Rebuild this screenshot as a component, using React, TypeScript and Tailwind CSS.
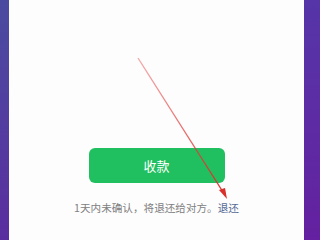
import React from "react";

export default function App() {
  return (
    <div className="relative flex h-[240px] w-[320px] overflow-hidden" style={{ fontFamily: '"Noto Sans CJK SC", "Noto Sans", sans-serif' }}>
      <div className="h-full w-[9px] bg-gradient-to-b from-[#4a4ba0] to-[#5a2d9f]" />
      <div className="flex h-full flex-1 flex-col items-center bg-[#fdfdfd] pt-[148px]">
        <div className="flex h-[35px] w-[136px] items-center justify-center rounded-[6px] bg-[#20bf60] text-[13px] text-white">
          收款
        </div>
        <div className="mt-[17px] text-[10.6px] leading-[16px] text-[#808080]">
          1天内未确认，将退还给对方。<span className="text-[#576b95]">退还</span>
        </div>
      </div>
      <div className="h-full w-[16px] bg-gradient-to-b from-[#5535a8] to-[#6420a0]" />
      <svg className="pointer-events-none absolute left-0 top-0" width="320" height="240" viewBox="0 0 320 240">
        <defs>
          <linearGradient id="g" x1="138" y1="58" x2="226" y2="196" gradientUnits="userSpaceOnUse">
            <stop offset="0" stopColor="#e85a5a" stopOpacity="0.5" />
            <stop offset="1" stopColor="#d8302a" />
          </linearGradient>
        </defs>
        <line x1="138" y1="58" x2="223" y2="192" stroke="url(#g)" strokeWidth="1.4" />
        <polygon points="227,199 219,190 225,188" fill="#d8302a" />
      </svg>
    </div>
  );
}
